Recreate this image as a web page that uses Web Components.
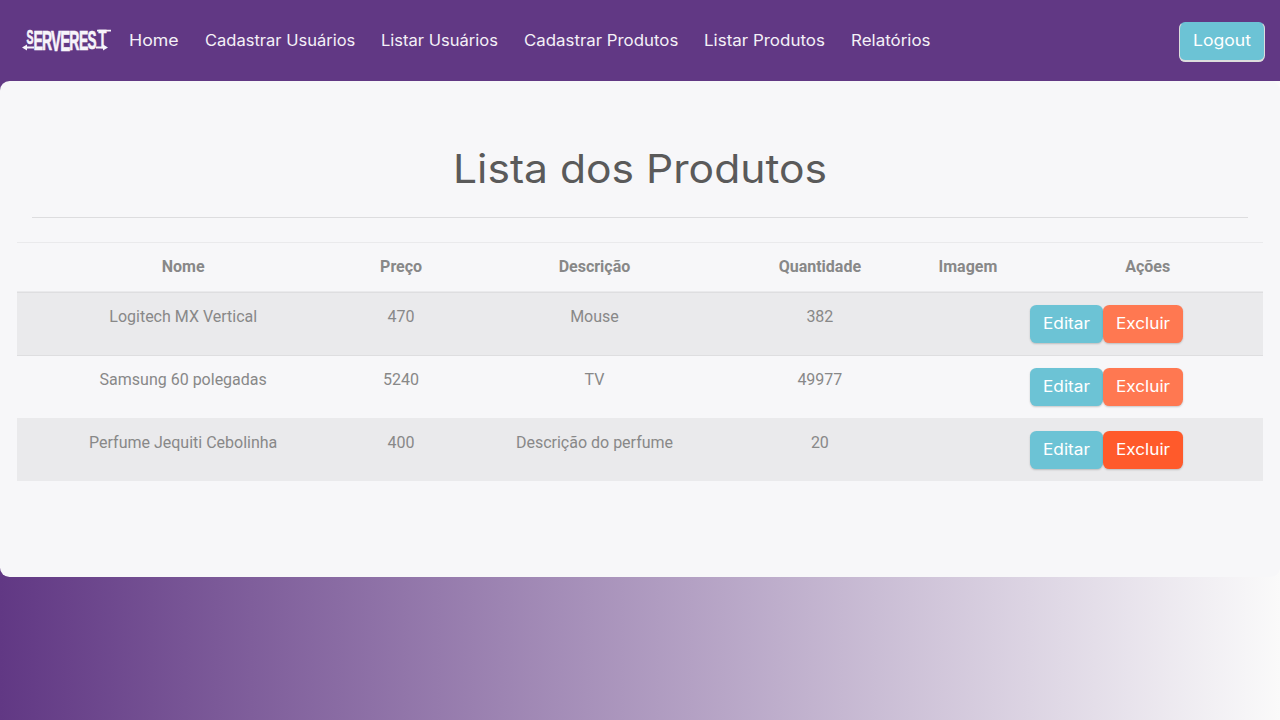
<!DOCTYPE html>
<html lang="pt-BR">
<head>
<meta charset="utf-8">
<title>ServeRest</title>
<style>
html,body{margin:0;height:100%}
body{font:400 16px/1.5 Roboto,sans-serif;color:#888;background:#fff;overflow:hidden}
</style>
</head>
<body>
<app-shell>
  <nav-bar slot="nav">
    <nav-item w="49.7">Home</nav-item>
    <nav-item w="150.3">Cadastrar Usuários</nav-item>
    <nav-item w="116.9">Listar Usuários</nav-item>
    <nav-item w="154.3">Cadastrar Produtos</nav-item>
    <nav-item w="120.9">Listar Produtos</nav-item>
    <nav-item w="79.5">Relatórios</nav-item>
    <action-button slot="end" w="58" outlined>Logout</action-button>
  </nav-bar>
  <product-list></product-list>
</app-shell>
<script>
const define = (name, html, setup) => {
  const tpl = document.createElement('template');
  tpl.innerHTML = html;
  customElements.define(name, class extends HTMLElement {
    constructor() {
      super();
      this.attachShadow({mode: 'open'}).append(tpl.content.cloneNode(true));
    }
    connectedCallback() { if (setup) setup(this, this.shadowRoot); }
  });
};

// Widens the glyphs so that a label fills the width given in "w".
define('fit-text', `<style>
:host{display:inline-block;white-space:nowrap;font-family:Inter,sans-serif;text-align:left}
span{display:inline-block;transform-origin:0 50%}
</style><span><slot></slot></span>`, (el, root) => {
  const span = root.querySelector('span');
  const w = parseFloat(el.getAttribute('w'));
  const natural = span.getBoundingClientRect().width;
  el.style.width = w + 'px';
  span.style.width = natural + 'px';
  span.style.transform = `scaleX(${w / natural})`;
});

const wrapFit = (el, root) => {
  const f = document.createElement('fit-text');
  f.textContent = el.textContent.trim();
  f.setAttribute('w', el.getAttribute('w'));
  root.querySelector('.label').replaceChildren(f);
};

define('nav-item', `<style>
:host{display:block;padding:0 13px;font-size:15.6px;line-height:24px;color:#f4f0f7}
</style><div class="label"></div>`, wrapFit);

define('action-button', `<style>
:host{display:inline-block;box-sizing:border-box;height:38px;padding:7px 13px;border-radius:6.4px;
background:#6cc3d5;color:#fff;font-size:15.6px;line-height:24px;box-shadow:0 1px 2px rgba(0,0,0,.2);vertical-align:middle}
:host([kind=danger]){background:#ff7851}
:host([active]){background:#ff5a2b}
:host([outlined]){height:40px;border:1px solid #ddd;border-bottom-width:2px;border-top-color:#6cc3d5;padding:6px 13px;box-shadow:none}
</style><div class="label"></div>`, wrapFit);

define('brand-logo', `<style>
:host{display:block;width:92px;height:28px}
svg{display:block;overflow:visible}
text{font-family:"Liberation Sans",sans-serif;font-weight:700;fill:#f7f4fa;stroke:#f7f4fa;stroke-width:.7}
</style>
<svg width="92" height="28" viewBox="0 0 92 28">
  <text transform="scale(.52 1)"><tspan x="10.5" y="17.5" font-size="20">S</tspan><tspan x="24" y="23.5" font-size="27">E</tspan><tspan x="40.5" y="23.5" font-size="27">R</tspan><tspan x="57.5" y="25" font-size="29">V</tspan><tspan x="75.5" y="25" font-size="29">E</tspan><tspan x="93" y="23.5" font-size="27">R</tspan><tspan x="111.5" y="23.5" font-size="27">E</tspan><tspan x="128" y="23" font-size="26">S</tspan><tspan x="149" y="21.5" font-size="25">T</tspan></text>
  <path d="M1 21.5l5-3v2h7v2H6v2zM87 21.5l-5-3v2h-7v2h7v2zM76 3.8h14v1.8H76z" fill="#f7f4fa"/>
</svg>`);

define('nav-bar', `<style>
:host{display:flex;box-sizing:border-box;height:81px;padding:0 15px 0 21px;background:#613884;align-items:flex-start}
brand-logo{margin-top:26px}
.items{display:flex;margin:29px auto 0 3px}
.end{margin-top:22px;display:flex}
</style><brand-logo></brand-logo><div class="items"><slot></slot></div><div class="end"><slot name="end"></slot></div>`);

define('app-shell', `<style>
:host{display:flex;flex-direction:column;height:720px}
main{flex:1;background:linear-gradient(to right,#613884,#fafafa)}
.card{height:496px;box-sizing:border-box;background:#f7f7f9;border-radius:9.6px;padding:64px 17px 0}
</style><slot name="nav"></slot><main><div class="card"><slot></slot></div></main>`);

const rows = [
  ['Logitech MX Vertical', '470', 'Mouse', '382'],
  ['Samsung 60 polegadas', '5240', 'TV', '49977'],
  ['Perfume Jequiti Cebolinha', '400', 'Descrição do perfume', '20', true]
];
define('product-list', `<style>
:host{display:block;text-align:center}
h1{margin:0;font-weight:400;font-size:39px;line-height:48px;color:#5a5a5a}
hr{border:0;border-top:1px solid rgba(0,0,0,.1);margin:23px 15px 24px}
table{width:1246px;table-layout:fixed;border-collapse:collapse}
th,td{padding:12px;vertical-align:top;border-top:1px solid rgba(0,0,0,.05)}
thead th{vertical-align:bottom;border-bottom:2px solid rgba(0,0,0,.05)}
tbody tr:nth-of-type(odd){background:rgba(0,0,0,.05)}
.actions{display:flex;margin-left:-14px}
</style>
<h1><fit-text w="374">Lista dos Produtos</fit-text></h1>
<hr>
<table><colgroup><col style="width:332.4px"><col style="width:103.4px"><col style="width:283.4px"><col style="width:167.4px"><col style="width:128.8px"><col style="width:230.6px"></colgroup>
<thead><tr><th>Nome</th><th>Preço</th><th>Descrição</th><th>Quantidade</th><th>Imagem</th><th>Ações</th></tr></thead>
<tbody></tbody></table>`, (el, root) => {
  root.querySelector('tbody').innerHTML = rows.map(r =>
    `<tr>${r.slice(0, 4).map(c => `<td>${c}</td>`).join('')}<td></td><td><div class="actions">
    <action-button w="47">Editar</action-button><action-button kind="danger" ${r[4] ? 'active' : ''} w="54">Excluir</action-button></div></td></tr>`).join('');
});
</script>
</body>
</html>
